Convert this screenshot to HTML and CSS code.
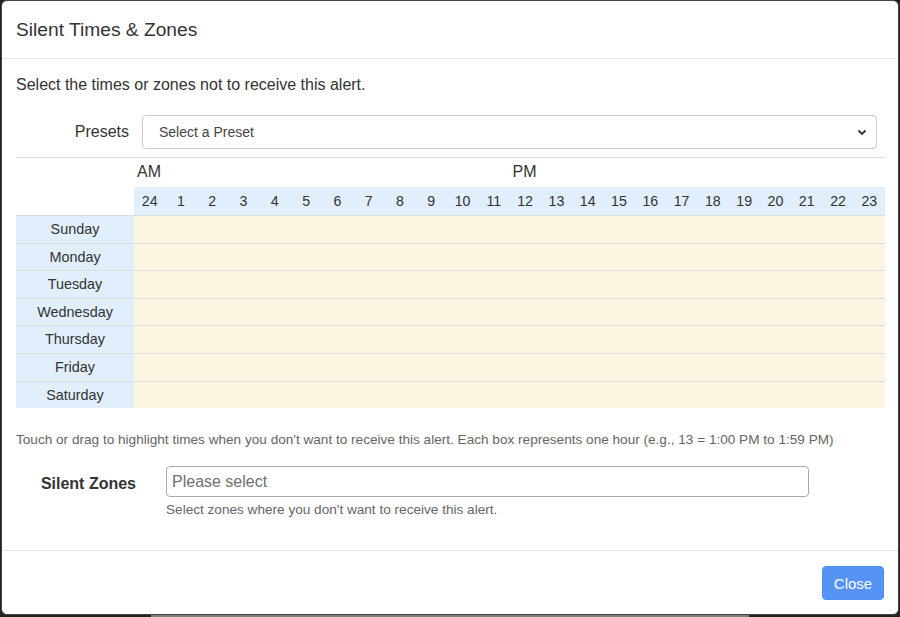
FILE: index.html
```html
<!DOCTYPE html>
<html lang="en">
<head>
<meta charset="utf-8">
<title>Silent Times &amp; Zones</title>
<link rel="stylesheet" href="styles.css">
</head>
<body>
<div class="modal">
  <div class="modal-header">
    <h5 class="modal-title">Silent Times &amp; Zones</h5>
  </div>
  <div class="modal-body">
    <p class="intro">Select the times or zones not to receive this alert.</p>
    <div class="presets-row">
      <label class="presets-label">Presets</label>
      <div class="select">
        <span class="select-text">Select a Preset</span>
        <svg class="chevron" width="10" height="8" viewBox="0 0 10 8"><path d="M1.5 2.5 L5 6 L8.5 2.5" fill="none" stroke="#333" stroke-width="1.8"/></svg>
      </div>
    </div>
    <div class="schedule">
      <div class="srow ampm">
        <div class="corner"></div>
        <div class="half">AM</div>
        <div class="half">PM</div>
      </div>
      <div class="srow hours">
        <div class="corner"></div>
        <div class="hr">24</div><div class="hr">1</div><div class="hr">2</div><div class="hr">3</div><div class="hr">4</div><div class="hr">5</div><div class="hr">6</div><div class="hr">7</div><div class="hr">8</div><div class="hr">9</div><div class="hr">10</div><div class="hr">11</div><div class="hr">12</div><div class="hr">13</div><div class="hr">14</div><div class="hr">15</div><div class="hr">16</div><div class="hr">17</div><div class="hr">18</div><div class="hr">19</div><div class="hr">20</div><div class="hr">21</div><div class="hr">22</div><div class="hr">23</div>
      </div>
      <div class="srow day"><div class="dayname">Sunday</div><div class="cells"></div></div>
      <div class="srow day"><div class="dayname">Monday</div><div class="cells"></div></div>
      <div class="srow day"><div class="dayname">Tuesday</div><div class="cells"></div></div>
      <div class="srow day"><div class="dayname">Wednesday</div><div class="cells"></div></div>
      <div class="srow day"><div class="dayname">Thursday</div><div class="cells"></div></div>
      <div class="srow day"><div class="dayname">Friday</div><div class="cells"></div></div>
      <div class="srow day"><div class="dayname">Saturday</div><div class="cells"></div></div>
    </div>
    <p class="help">Touch or drag to highlight times when you don't want to receive this alert. Each box represents one hour (e.g., 13 = 1:00 PM to 1:59 PM)</p>
    <div class="zones-row">
      <label class="zones-label">Silent Zones</label>
      <div class="zones-field">
        <input class="zones-input" type="text" placeholder="Please select">
        <div class="zones-help">Select zones where you don't want to receive this alert.</div>
      </div>
    </div>
  </div>
  <div class="modal-footer">
    <button class="btn-close" type="button">Close</button>
  </div>
</div>
</body>
</html>
```

FILE: styles.css
```css
html, body {
  margin: 0;
  padding: 0;
}
body {
  width: 900px;
  height: 617px;
  overflow: hidden;
  background-color: #222;
  background-image: linear-gradient(to right, #222 151px, #7d7d7d 151px, #7d7d7d 749px, #222 749px);
  background-size: 100% 2px;
  background-position: left bottom;
  background-repeat: no-repeat;
  font-family: "Liberation Sans", Arial, sans-serif;
  color: #333;
}
.modal {
  margin-left: 1px;
  width: 898px;
  height: 615px;
  box-sizing: border-box;
  background: #fff;
  border: 1px solid #444;
  border-radius: 6px;
  display: flex;
  flex-direction: column;
}
.modal-header {
  padding: 17px 14px 16px;
  border-bottom: 1px solid #e5e5e5;
}
.modal-title {
  margin: 0;
  font-size: 19.2px;
  font-weight: normal;
  line-height: 24px;
  color: #333;
}
.modal-body {
  flex: 1;
  padding: 16px 13px 0 14px;
}
.intro {
  margin: 0;
  font-size: 16px;
  line-height: 20px;
  color: #333;
}
.presets-row {
  display: flex;
  align-items: center;
  margin-top: 20px;
  padding-right: 8px;
}
.presets-label {
  width: 126px;
  box-sizing: border-box;
  padding-right: 13px;
  text-align: right;
  font-size: 16px;
  color: #333;
}
.select {
  flex: 1;
  height: 34px;
  box-sizing: border-box;
  border: 1px solid #ccc;
  border-radius: 4px;
  display: flex;
  align-items: center;
  padding: 0 9px 0 16px;
  font-size: 14px;
  color: #444;
}
.select-text {
  flex: 1;
}
.schedule {
  margin-top: 8px;
}
.srow {
  display: grid;
  grid-template-columns: 118px 1fr;
}
.ampm {
  grid-template-columns: 118px 1fr 1fr;
  border-top: 1px solid #ddd;
  height: 30px;
  box-sizing: border-box;
}
.half {
  padding-left: 3px;
  font-size: 16px;
  line-height: 28px;
  color: #333;
}
.hours {
  grid-template-columns: 118px repeat(24, 1fr);
  height: 28px;
}
.hr {
  background: #e1eefc;
  text-align: center;
  font-size: 14.2px;
  line-height: 28px;
  color: #333;
}
.day {
  height: 27.6px;
  box-sizing: border-box;
  border-top: 1px solid #dcdcdc;
}
.dayname {
  background: #e1eefc;
  text-align: center;
  font-size: 14.4px;
  line-height: 26px;
  color: #333;
}
.cells {
  background: #fcf5e2;
}
.help {
  margin: 23px 0 0;
  font-size: 13.6px;
  line-height: 18px;
  color: #666;
}
.zones-row {
  display: flex;
  margin-top: 17px;
}
.zones-label {
  width: 150px;
  box-sizing: border-box;
  padding-right: 30px;
  text-align: right;
  font-size: 16px;
  font-weight: bold;
  line-height: 31px;
  padding-top: 2px;
  color: #333;
}
.zones-field {
  width: 643px;
}
.zones-input {
  display: block;
  width: 643px;
  height: 31px;
  box-sizing: border-box;
  margin: 0;
  border: 1px solid #aaa;
  border-radius: 4px;
  padding: 0 5px;
  font-family: "Liberation Sans", Arial, sans-serif;
  font-size: 16px;
  color: #333;
  background: #fff;
}
.zones-input::placeholder {
  color: #707070;
}
.zones-help {
  margin-top: 4px;
  font-size: 13.6px;
  line-height: 18px;
  color: #666;
}
.modal-footer {
  border-top: 1px solid #e5e5e5;
  padding: 15px 14px 14px;
  display: flex;
  justify-content: flex-end;
}
.btn-close {
  width: 62px;
  height: 34px;
  border: 1px solid #5090f5;
  border-radius: 4px;
  background: #5593f6;
  color: #fff;
  font-family: "Liberation Sans", Arial, sans-serif;
  font-size: 15px;
  padding: 0;
}
```
